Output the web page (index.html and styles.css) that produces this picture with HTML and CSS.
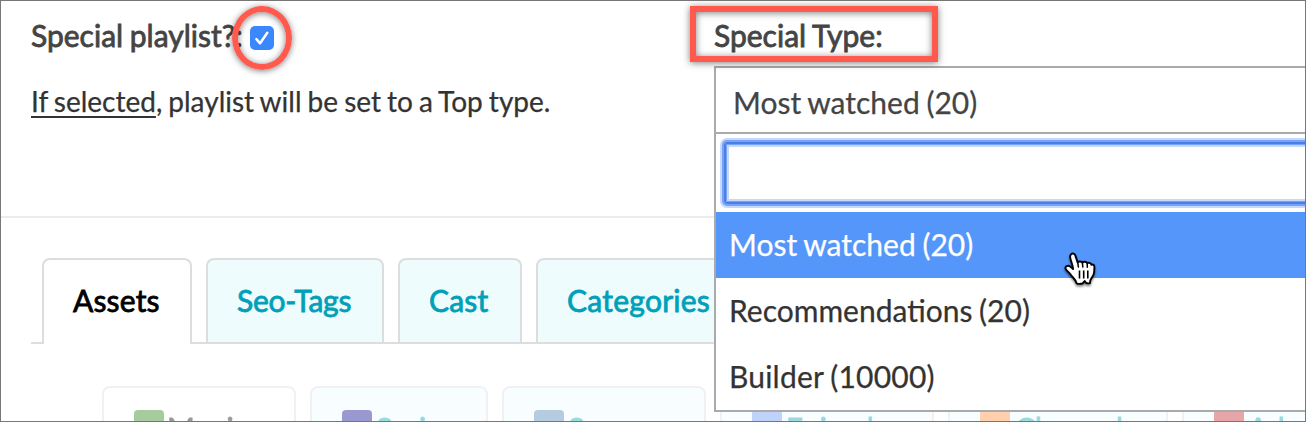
FILE: index.html
```html
<!DOCTYPE html>
<html lang="en">
<head>
<meta charset="utf-8">
<title>Playlist</title>
<link rel="stylesheet" href="styles.css">
</head>
<body>
<main class="page">
  <section class="fields">
    <div class="field">
      <div class="label-row">
        <span class="label label-playlist">Special playlist?:</span>
        <span class="checkbox">
          <svg viewBox="0 0 24 24" width="24" height="24"><path d="M6.4 13.1 L10.1 17.3 L17.3 6.8" fill="none" stroke="#fff" stroke-width="2.5" stroke-linecap="round" stroke-linejoin="round"/></svg>
          <span class="ring"></span>
        </span>
      </div>
      <p class="hint"><u>If selected</u>, playlist will be set to a Top type.</p>
    </div>
    <div class="field field-type">
      <div class="label-row"><span class="label label-type">Special Type:<span class="frame"></span></span></div>
      <div class="dropdown">
        <div class="current"><span>Most watched (20)</span></div>
        <div class="search"></div>
        <ul class="options">
          <li class="option active"><span>Most watched (20)</span>
            <svg class="cursor" viewBox="0 0 34 38" width="34" height="38"><path d="M8.2 4.2 C9.4 3 11.6 3.5 12.3 5.4 L14.6 12.4 C15.6 11 18.8 11.3 19.4 12.7 C20.5 11.3 23.6 11.5 24.2 13.2 C25.5 12.3 28 12.8 28.4 14.8 C30.4 13.9 31.6 15.2 31.4 17.6 L31.1 22.5 C30.8 25.4 28.2 28.4 27.3 30.5 L27 33.2 C25.4 33.6 24 33.4 22.9 32.8 L21.7 31.1 L19.6 33.5 C17.3 34 14.8 34 13.6 33.2 C12.8 29.8 10.3 28.2 8.2 25.4 C6.5 22.9 4.2 21.4 2.9 19.3 C1.4 17.1 4.4 14.6 7 16.4 L10.1 19.1 C10 15.2 8 11.8 7.3 8.1 C6.9 6.4 7.1 5 8.2 4.2 Z" fill="#fff" stroke="#000" stroke-width="1.9" stroke-linejoin="round"/><path d="M14.7 12.4 L15.4 17 M19.4 12.7 L19.8 17 M24.2 13.4 L24.3 17.3" fill="none" stroke="#000" stroke-width="1.5" stroke-linecap="round"/><path d="M16.5 20.5 V28.5 M20.7 20.5 V28.5 M24.8 20.5 V28.5" fill="none" stroke="#000" stroke-width="1.6"/></svg>
          </li>
          <li class="option"><span>Recommendations (20)</span></li>
          <li class="option"><span class="wide">Builder (10000)</span></li>
        </ul>
      </div>
    </div>
  </section>
  <nav class="tabs">
    <a class="tab tab-assets selected"><span>Assets</span></a>
    <a class="tab tab-seo"><span>Seo-Tags</span></a>
    <a class="tab tab-cast"><span>Cast</span></a>
    <a class="tab tab-categories"><span>Categories</span></a>
  </nav>
  <nav class="kinds">
    <a class="kind kind-movies"><i class="swatch"></i>Movies</a>
    <a class="kind kind-series"><i class="swatch"></i>Series</a>
    <a class="kind kind-songs"><i class="swatch"></i>Songs</a>
    <a class="kind kind-episodes"><i class="swatch"></i>Episodes</a>
    <a class="kind kind-channels"><i class="swatch"></i>Channels</a>
    <a class="kind kind-ads"><i class="swatch"></i>Ads</a>
  </nav>
</main>
</body>
</html>
```
FILE: styles.css
```css
* { box-sizing: border-box; }
body { margin: 0; overflow: hidden; font-family: Lato, sans-serif; color: #333; background: #fff; }
.page { position: relative; width: 1306px; height: 422px; overflow: hidden; }
.page::after { content: ""; position: absolute; inset: 0; border: 1px solid #777; z-index: 10; }
.fields { display: grid; grid-template-columns: 683px 700px; height: 218px; padding-left: 31px; border-bottom: 2px solid #ececec; }
.field { padding-top: 15px; }
.label-row { display: flex; height: 40px; align-items: center; }
.label { position: relative; font-size: 30px; line-height: 40px; word-spacing: -1px; color: #444; white-space: nowrap; -webkit-text-stroke: 0.8px currentColor; }
.label-playlist { width: 219px; }
.checkbox { position: relative; width: 24px; height: 24px; margin-top: 6px; border-radius: 5px; background: #3b88fd; }
.checkbox svg { display: block; }
.ring { position: absolute; left: -18px; top: -20px; width: 60px; height: 64px; border: 6px solid #ff5a4d; border-radius: 50%; box-shadow: 0 1px 6px rgba(0,0,0,.5), inset 0 1px 6px rgba(0,0,0,.5); z-index: 2; }
.hint { margin: 26px 0 0; font-size: 28px; line-height: 40px; word-spacing: -1.1px; white-space: nowrap; -webkit-text-stroke: .25px currentColor; }
.hint u { text-decoration-thickness: 2px; text-underline-offset: 4px; text-decoration-skip-ink: none; }
.frame { position: absolute; left: -24px; top: -9px; width: 248px; height: 56px; border: 6px solid #ff5a4d; box-shadow: 0 1px 7px rgba(0,0,0,.5), inset 0 1px 7px rgba(0,0,0,.5); z-index: 2; }
.dropdown { position: relative; z-index: 1; margin-top: 11px; height: 346px; border: 2px solid #aaa; background: #fff; font-size: 30px; word-spacing: -1px; -webkit-text-stroke: .25px currentColor; }
.current { height: 66px; padding-left: 17px; border-bottom: 2px solid #aaa; color: #444; line-height: 68px; }
.search { height: 62px; margin: 8px 8px 8px; border: 2px solid #4d7fe0; border-radius: 3px; box-shadow: 0 0 0 2px #75a3fb, 0 0 0 4px #c5d8ff, inset 0 0 0 1px #75a3fb, inset 0 0 0 3px #c5d8ff; }
.options { margin: 0; padding: 0; list-style: none; }
.option { position: relative; height: 66px; padding-left: 13px; line-height: 64px; }
.wide { letter-spacing: .2px; }
.active { background: #5596fb; color: #fff; }
.cursor { position: absolute; left: 347px; top: 38px; z-index: 3; filter: drop-shadow(0 2px 1px rgba(0,0,0,.45)); }
.tabs { display: flex; gap: 14px; height: 86px; margin: 40px 0 0 31px; padding-left: 11px; border-bottom: 2px solid #ddd; }
.tab { height: 84px; padding-left: 29px; border: 2px solid #ddd; border-bottom: 0; border-radius: 8px 8px 0 0; background: #eefcfe; color: #00a0b8; font-size: 30px; line-height: 80px; -webkit-text-stroke: .8px currentColor; }
.selected { height: 86px; background: #fff; color: #000; }
.tab-assets { width: 150px; letter-spacing: .15px; }
.tab-seo { width: 178px; letter-spacing: -.25px; }
.tab-cast { width: 124px; letter-spacing: .2px; }
.tab-categories { width: 220px; letter-spacing: .25px; }
.kinds { display: flex; gap: 14px; margin: 42px 0 0 102px; opacity: .4; }
.kind { display: flex; gap: 4px; flex: none; height: 86px; padding: 22px 0 0 30px; border: 2px solid #ddd; border-radius: 8px 8px 0 0; background: #eefcff; color: #00a0b0; font-size: 30px; line-height: 36px; -webkit-text-stroke: .8px currentColor; }
.swatch { width: 30px; height: 30px; border-radius: 4px; }
.kind-movies { width: 194px; gap: 3px; background: #fff; color: #000; }
.kind-series { width: 178px; }
.kind-songs { width: 204px; }
.kind-episodes { width: 214px; }
.kind-channels { width: 220px; gap: 5px; }
.kind-ads { width: 180px; }
.kind-movies .swatch { background: #208010; }
.kind-series .swatch { background: #06008c; }
.kind-songs .swatch { background: #497fb0; }
.kind-episodes .swatch { background: #6093f3; }
.kind-channels .swatch { background: #ff8c30; }
.kind-ads .swatch { background: #c4202a; }
```
